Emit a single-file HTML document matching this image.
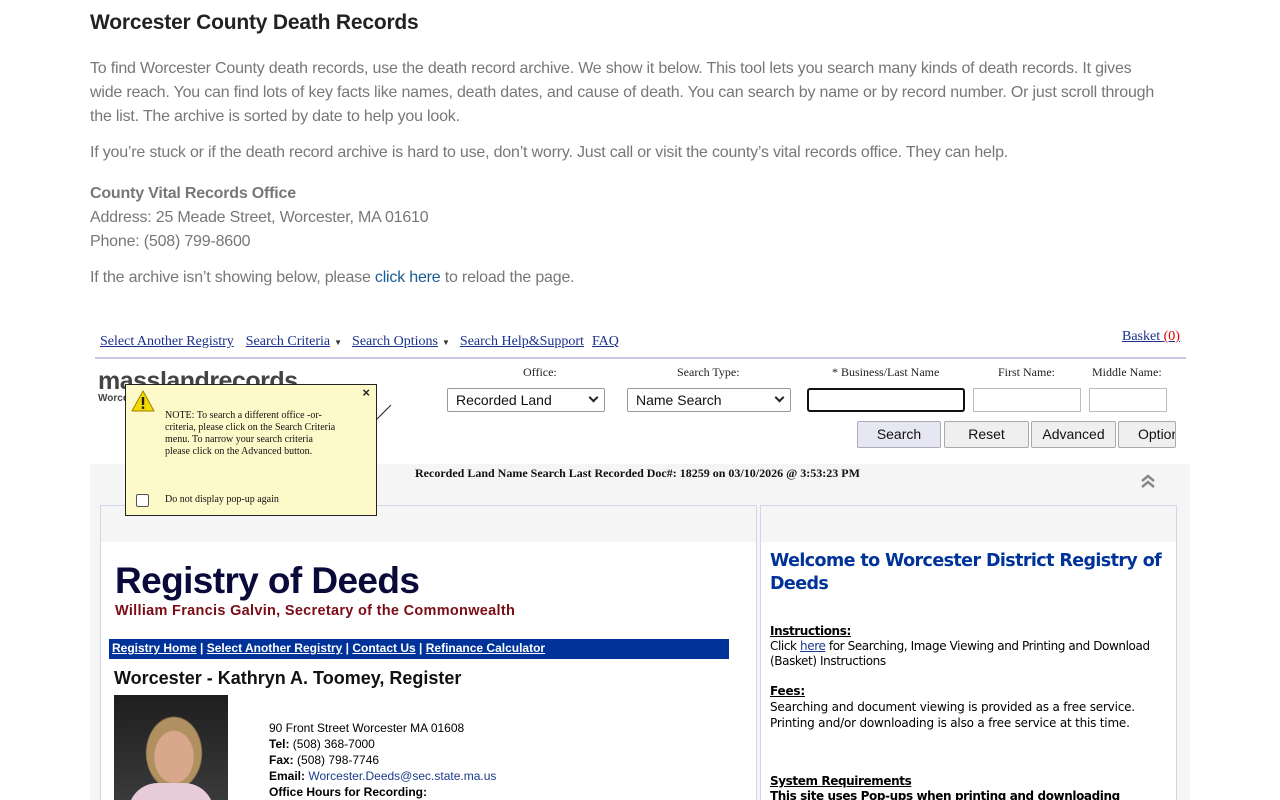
<!DOCTYPE html>
<html><head><meta charset="utf-8"><style>
*{margin:0;padding:0;box-sizing:border-box}
html,body{width:1280px;height:800px;overflow:hidden}
body{background:#fff;font-family:"Liberation Sans",sans-serif;position:relative}
.a{position:absolute;white-space:nowrap}
.p{color:#777;font-size:16px;letter-spacing:-0.2px}
h1{position:absolute;left:90px;top:11px;font-size:21px;font-weight:bold;color:#222;letter-spacing:-0.2px}
.ser{font-family:"Liberation Serif",serif}
.nav a{color:#1a2f8a;text-decoration:underline;font-size:14px}
.nav span.ar{font-size:8px;color:#333;margin:0 10px 0 4px}
.lbl{font-family:"Liberation Serif",serif;font-size:12px;color:#222}
.sel{position:absolute;height:24px;border:1px solid #999;background:#fff;font-size:14px;padding:3px 8px;color:#111;border-radius:2px}
.sel i{position:absolute;right:7px;top:5px;width:7px;height:7px;border-right:2px solid #222;border-bottom:2px solid #222;transform:rotate(45deg)}
.inp{position:absolute;height:24px;border:1px solid #bbb;background:#fff}
.btn{position:absolute;height:27px;border:1px solid #aaa;background:#efefef;font-size:14px;text-align:center;line-height:25px;color:#111;border-radius:2px}
.v{font-family:"Liberation Sans",sans-serif;font-size:12px;color:#000;line-height:16px}
.dv{font-family:"DejaVu Sans",sans-serif;font-size:12px;color:#000}
</style></head><body>
<h1>Worcester County Death Records</h1>
<div class="a p" style="left:90px;top:57px;line-height:24px">To find Worcester County death records, use the death record archive. We show it below. This tool lets you search many kinds of death records. It gives<br>wide reach. You can find lots of key facts like names, death dates, and cause of death. You can search by name or by record number. Or just scroll through<br>the list. The archive is sorted by date to help you look.</div>
<div class="a p" style="left:90px;top:144px">If you’re stuck or if the death record archive is hard to use, don’t worry. Just call or visit the county’s vital records office. They can help.</div>
<div class="a p" style="left:90px;top:182px;line-height:24px"><b>County Vital Records Office</b><br>Address: 25 Meade Street, Worcester, MA 01610<br>Phone: (508) 799-8600</div>
<div class="a p" style="left:90px;top:269px">If the archive isn’t showing below, please <span style="color:#1a5a96">click here</span> to reload the page.</div>

<div class="a nav ser" style="left:100px;top:332px"><a>Select Another Registry</a>&nbsp;&nbsp; <a>Search Criteria</a><span class="ar">▼</span><a>Search Options</a><span class="ar">▼</span><a>Search Help&amp;Support</a>&nbsp;&nbsp;<a>FAQ</a></div>
<div class="a ser" style="left:1122px;top:329px;font-size:14px;color:#1a2f8a;text-decoration:underline">Basket <span style="color:#d00">(0)</span></div>
<div class="a" style="left:95px;top:357px;width:1091px;height:2px;background:#c9c9e4"></div>
<div class="a" style="left:98px;top:367px;font-size:25px;font-weight:bold;color:#444;letter-spacing:-0.5px">masslandrecords</div>
<div class="a" style="left:98px;top:393px;font-size:10px;font-weight:bold;color:#444">Worcester</div>
<div class="a lbl" style="left:523px;top:365px">Office:</div>
<div class="a lbl" style="left:677px;top:365px">Search Type:</div>
<div class="a lbl" style="left:832px;top:365px">* Business/Last Name</div>
<div class="a lbl" style="left:998px;top:365px">First Name:</div>
<div class="a lbl" style="left:1092px;top:365px">Middle Name:</div>
<div class="sel" style="left:447px;top:388px;width:158px">Recorded Land<i></i></div>
<div class="sel" style="left:627px;top:388px;width:164px">Name Search<i></i></div>
<div class="inp" style="left:807px;top:388px;width:158px;border:2px solid #111;border-radius:3px"></div>
<div class="inp" style="left:973px;top:388px;width:108px"></div>
<div class="inp" style="left:1089px;top:388px;width:78px"></div>
<div class="btn" style="left:857px;top:421px;width:84px;border-color:#aab;background:#e7e7f4">Search</div>
<div class="btn" style="left:944px;top:421px;width:85px">Reset</div>
<div class="btn" style="left:1031px;top:421px;width:85px">Advanced</div>
<div class="btn" style="left:1118px;top:421px;width:58px;text-align:left;padding-left:19px;overflow:hidden">Option</div>
<div class="a" style="left:90px;top:464px;width:1100px;height:336px;background:#f5f5f5"></div>
<div class="a ser" style="left:415px;top:466px;font-size:12px;font-weight:bold;color:#111">Recorded Land Name Search Last Recorded Doc#: 18259 on 03/10/2026 @ 3:53:23 PM</div>
<svg class="a" style="left:1140px;top:473px" width="16" height="16" viewBox="0 0 16 16"><path d="M2 8 L8 3 L14 8 M2 14 L8 9 L14 14" fill="none" stroke="#888" stroke-width="2.5"/></svg>
<div class="a" style="left:100px;top:505px;width:657px;height:300px;border:1px solid #d4d4ee;background:#fff"><div style="height:36px;background:#f5f5f5"></div></div>
<div class="a" style="left:760px;top:505px;width:417px;height:300px;border:1px solid #d4d4ee;background:#fff"><div style="height:36px;background:#f5f5f5"></div></div>
<div class="a" style="left:115px;top:560px;font-size:37px;font-weight:bold;color:#0a0a3a;letter-spacing:-0.6px">Registry of Deeds</div>
<div class="a" style="left:115px;top:603px;font-size:14.5px;font-weight:bold;color:#7a0d16;letter-spacing:0.3px">William Francis Galvin, Secretary of the Commonwealth</div>
<div class="a" style="left:109px;top:639px;width:620px;height:20px;background:#003399;color:#fff;font-size:12px;font-weight:bold;padding:2px 3px"><u>Registry Home</u> | <u>Select Another Registry</u> | <u>Contact Us</u> | <u>Refinance Calculator</u></div>
<div class="a" style="left:114px;top:668px;font-size:18px;font-weight:bold;color:#111">Worcester - Kathryn A. Toomey, Register</div>
<div class="a" style="left:114px;top:695px;width:114px;height:105px;overflow:hidden;background:radial-gradient(ellipse 24px 32px at 60px 62px,#d9a88c 80%,transparent 84%),radial-gradient(ellipse 34px 44px at 60px 58px,#b09060 80%,transparent 84%),linear-gradient(#1e1e1e,#3a3a3a)"><div style="position:absolute;left:14px;top:88px;width:86px;height:30px;background:#e8cbd8;border-radius:30px 30px 0 0"></div></div>
<div class="a v" style="left:269px;top:720px">90 Front Street Worcester MA 01608<br><b>Tel:</b> (508) 368-7000<br><b>Fax:</b> (508) 798-7746<br><b>Email:</b> <span style="color:#1a3a8a">Worcester.Deeds@sec.state.ma.us</span><br><b>Office Hours for Recording:</b><br>Monday-Friday</div>
<div class="a" style="left:770px;top:550px;font-family:'DejaVu Sans',sans-serif;font-size:17.5px;font-weight:bold;color:#003399;line-height:23px;letter-spacing:-0.6px">Welcome to Worcester District Registry of<br>Deeds</div>
<div class="a dv" style="left:770px;top:624px;line-height:15px;letter-spacing:-0.4px"><b><u>Instructions:</u></b><br>Click <u style="color:#1a3a8a">here</u> for Searching, Image Viewing and Printing and Download<br>(Basket) Instructions</div>
<div class="a dv" style="left:770px;top:683px;line-height:16px;letter-spacing:-0.2px"><b><u>Fees:</u></b><br>Searching and document viewing is provided as a free service.<br>Printing and/or downloading is also a free service at this time.</div>
<div class="a dv" style="left:770px;top:774px;line-height:15px;letter-spacing:-0.4px"><b><u>System Requirements</u></b><br><b>This site uses Pop-ups when printing and downloading</b></div>

<div class="a" style="left:125px;top:384px;width:252px;height:132px;background:#fdf9c8;border:1px solid #222">
<svg style="position:absolute;left:5px;top:5px" width="24" height="22" viewBox="0 0 24 22"><path d="M12 1 L23 21 L1 21 Z" fill="#f5d800" stroke="#a08000" stroke-width="1" stroke-linejoin="round"/><rect x="10.8" y="7" width="2.4" height="8" fill="#222"/><rect x="10.8" y="16.5" width="2.4" height="2.4" fill="#222"/></svg>
<div style="position:absolute;right:6px;top:0;font-size:13px;font-weight:bold;color:#222">×</div>
<div class="ser" style="position:absolute;left:39px;top:25px;font-size:10px;line-height:12px;color:#111">NOTE: To search a different office -or-<br>criteria, please click on the Search Criteria<br>menu. To narrow your search criteria<br>please click on the Advanced button.</div>
<div style="position:absolute;left:10px;top:109px;width:13px;height:13px;border:1px solid #555;border-radius:2px;background:#fff"></div>
<div class="ser" style="position:absolute;left:39px;top:109px;font-size:10px;color:#111">Do not display pop-up again</div>
</div>
<svg class="a" style="left:376px;top:403px" width="16" height="18"><path d="M0 17 L15 2" stroke="#222" stroke-width="1"/></svg>
</body></html>
